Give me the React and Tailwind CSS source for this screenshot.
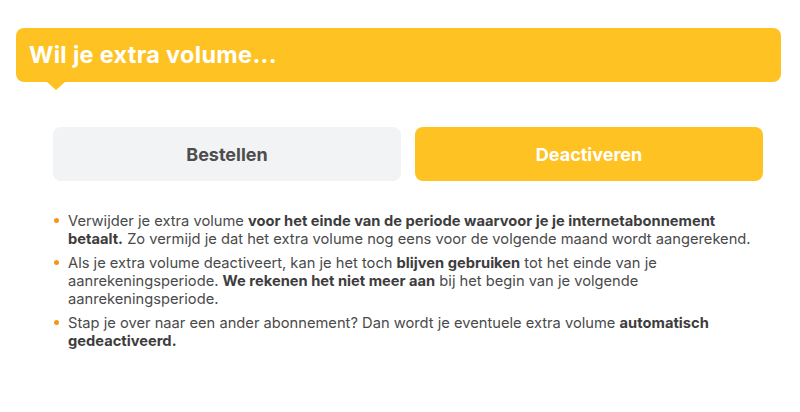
export default function App() {
  const items = [
    <>
      Verwijder je extra volume <b>voor het einde van de periode waarvoor je je internetabonnement betaalt.</b> Zo vermijd je dat het extra volume nog eens voor de volgende maand wordt aangerekend.
    </>,
    <>
      Als je extra volume deactiveert, kan je het toch <b>blijven gebruiken</b> tot het einde van je aanrekeningsperiode. <b>We rekenen het niet meer aan</b> bij het begin van je volgende aanrekeningsperiode.
    </>,
    <>
      Stap je over naar een ander abonnement? Dan wordt je eventuele extra volume <b>automatisch gedeactiveerd.</b>
    </>,
  ];

  return (
    <div className="w-[800px] h-[412px] bg-white font-['Inter',sans-serif] pt-[28px]">
      <div className="ml-[16px] w-[765px] relative">
        <div className="h-[54px] bg-[#fec322] rounded-[8px] flex items-center pl-[13px]">
          <h1 className="text-white font-bold text-[23.5px] tracking-[0.3px]">Wil je extra volume...</h1>
        </div>
        <div className="absolute left-[31px] top-[54px] w-0 h-0 border-l-[9px] border-r-[9px] border-t-[8px] border-l-transparent border-r-transparent border-t-[#fec322]" />
      </div>

      <div className="ml-[53px] w-[710px] mt-[45px] flex gap-[14px]">
        <button className="flex-1 h-[54px] rounded-[8px] bg-[#f2f3f5] text-[#4d4d4d] font-bold text-[18px]">
          Bestellen
        </button>
        <button className="flex-1 h-[54px] rounded-[8px] bg-[#fec322] text-white font-bold text-[18px]">
          Deactiveren
        </button>
      </div>

      <ul className="ml-[53px] w-[716px] mt-[31px] flex flex-col gap-[6px] text-[14.7px] leading-[18px] text-[#4a4a4a]">
        {items.map((it, i) => (
          <li key={i} className="flex">
            <span className="w-[15px] shrink-0 flex pt-[6px] pl-[1px]">
              <span className="w-[5px] h-[5px] rounded-full bg-[#f7941d]" />
            </span>
            <span className="[&_b]:font-bold [&_b]:text-[#3d3d3d]">{it}</span>
          </li>
        ))}
      </ul>
    </div>
  );
}
